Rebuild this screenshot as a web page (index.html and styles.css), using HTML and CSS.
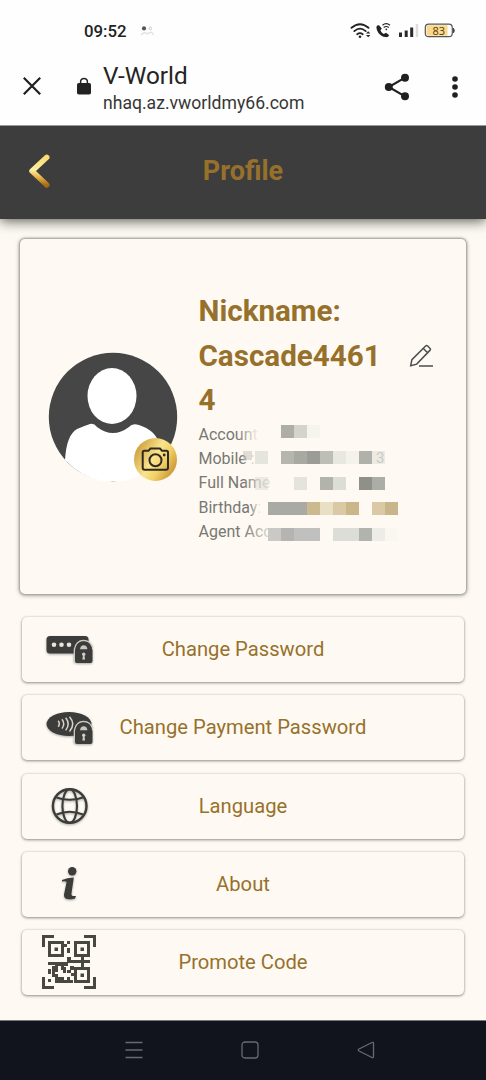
FILE: index.html
```html
<!DOCTYPE html>
<html lang="en">
<head>
<meta charset="utf-8">
<meta name="viewport" content="width=device-width, initial-scale=1">
<title>V-World</title>
<link rel="stylesheet" href="styles.css">
</head>
<body>
<div class="phone">
  <div class="status">
    <span class="clock">09:52</span>
    <svg class="people" width="16" height="12" viewBox="0 0 16 12"><circle cx="4" cy="3.400" r="2.100" fill="#555"/><circle cx="10.400" cy="3.400" r="1.300" fill="none" stroke="#ccc"/><path d="M1 10q3.500-4 6.500-1q4-4 6 1" fill="none" stroke="#e2e2e2" stroke-width="1.500"/></svg>
    <svg class="signals" width="108" height="18" viewBox="0 0 108 18">
      <g fill="none" stroke="#222" stroke-width="1.800" stroke-linecap="round">
        <path d="M1.500 5.800q8.500-7.200 17 0M4.300 9.100q5.700-4.900 11.400 0M7.200 12.200q2.800-2.200 5.500 0"/>
      </g>
      <circle cx="10" cy="14.700" r="1.300" fill="#222"/>
      <path d="M16 11.500l2.200-2.300 2.200 2.300zM16 13l2.200 2.300 2.200-2.300z" fill="#222"/>
      <path d="M29 3.300c-1.900-.4-2.800 1-2.500 3 .7 4.300 4.100 8.100 8.700 8.800 2 .3 3.700-.5 3.800-2.200l-3-2.200-2.200 1.400c-1.600-.9-2.700-2.200-3.300-3.800l1.300-1.800z" fill="#222"/>
      <path d="M32.500 3.200q3.700-3 7.500 0M33.700 5.500q2.500-2 5.100 0" fill="none" stroke="#222" stroke-width="1.200"/><circle cx="36.300" cy="7.300" r=".9" fill="#222"/>
      <path d="M49 10.500h3v4.500h-3zM54.700 8.500h3V15h-3zM60.200 5.500h3V15h-3z" fill="#2a2a2a"/><path d="M65.700 2h2.500v13h-2.500z" fill="#ddd"/>
      <rect x="75.300" y="2.200" width="27" height="12.500" rx="3.500" fill="#fff" stroke="#555" stroke-width="1.200"/>
      <path d="M79 3.200h18.500v10.500H79q-2.500 0-2.500-2.500V5.500q0-2.300 2.500-2.300z" fill="#fad88c"/>
      <path d="M103.500 6.200q1.600 2.300 0 4.600z" fill="#444" stroke="#444"/>
      <text class="battery" x="88.800" y="12.700" text-anchor="middle">83</text>
    </svg>
  </div>
  <div class="browser">
    <svg class="close" width="20" height="20" viewBox="0 0 20 20"><path d="M1.800 1.800l16.400 16.400M18.200 1.800L1.800 18.200" stroke="#202020" stroke-width="2.200"/></svg>
    <svg class="lock" width="14" height="18" viewBox="0 0 14 18"><path d="M3.600 7V4.800a3.400 3.400 0 0 1 6.800 0V7" fill="none" stroke="#222" stroke-width="1.500"/><rect width="14" height="11.500" y="6" rx="1.800" fill="#222"/></svg>
    <div class="address"><div class="site">V-World</div><div class="url">nhaq.az.vworldmy66.com</div></div>
    <svg class="share" width="26" height="28" viewBox="0 0 26 28"><path d="M21 4.600L4.800 14 21 23.400" fill="none" stroke="#202020" stroke-width="2.200"/><g fill="#202020"><circle cx="21" cy="4.700" r="4"/><circle cx="4.800" cy="14" r="4"/><circle cx="21" cy="23.300" r="4"/></g></svg>
    <svg class="more" width="6" height="24" viewBox="0 0 6 24" fill="#202020"><circle cx="3" cy="4" r="2.800"/><circle cx="3" cy="12" r="2.800"/><circle cx="3" cy="20" r="2.800"/></svg>
  </div>
  <header class="header">
    <svg class="back" width="24" height="38" viewBox="0 0 24 38">
      <defs><linearGradient id="arrow" x1="0" y1="0" x2="0" y2="1"><stop offset="0" stop-color="#f8dc70"/><stop offset=".45" stop-color="#fff0a0"/><stop offset=".72" stop-color="#e6b44b"/><stop offset="1" stop-color="#a86a12"/></linearGradient></defs>
      <path d="M4 18L18.800 4.300M4 18L18.800 32" fill="none" stroke="url(#arrow)" stroke-width="5.400" stroke-linecap="round"/>
    </svg>
    <h1>Profile</h1>
  </header>
  <main class="content">
    <section class="profile">
      <svg class="avatar" width="130" height="132" viewBox="0 0 130 132">
        <defs>
          <clipPath id="disc"><path d="M0 0H130V110L110 129H20L0 110z"/></clipPath>
          <linearGradient id="gold" x1="0" y1=".2" x2="1" y2=".8"><stop offset="0" stop-color="#c99732"/><stop offset=".45" stop-color="#fae48d"/><stop offset=".65" stop-color="#f2d269"/><stop offset="1" stop-color="#c38b2c"/></linearGradient>
        </defs>
        <circle cx="65" cy="65" r="64.200" fill="#464646"/>
        <path d="M17 108C18 91 22 81 29 77Q36 74 42 72Q46 71 49 75Q65 87 81 75Q84 71 91 73Q107 78 111 91L113 110Q90 130 65 130Q38 130 17 108z" fill="#fff" clip-path="url(#disc)"/>
        <ellipse cx="64" cy="44" rx="24.500" ry="28" fill="#fff"/>
        <circle cx="107.500" cy="107.500" r="21.500" fill="url(#gold)"/>
        <g fill="none" stroke="#302a20" stroke-width="2"><path d="M94.700 100.500q0-1.700 1.700-1.700h4l2.100-2.300h9.500l2 2.300h4.300q1.700 0 1.700 1.700v15.200q0 2-2 2H96.700q-2 0-2-2z"/><circle cx="107.500" cy="108.300" r="6"/></g><circle cx="116.200" cy="103" r="1.400" fill="#302a20"/>
      </svg>
      <div class="info">
        <div class="nickrow">
          <h2>Nickname: Cascade44614</h2>
          <svg class="pencil" width="25" height="24" viewBox="0 0 25 24" fill="none" stroke="#4c4c4c" stroke-width="1.500"><path d="M1.700 21.700l1.200-6L16.600 2q1-1.100 2.100 0l2.200 2.200q1.200 1.100 0 2.200L7.700 20.100zM14.300 4.500l4.300 4.300M10 22h14"/></svg>
        </div>
        <div class="details">
          <div>Account</div><div>Mobile :</div><div>Full Name</div><div>Birthday:</div><div>Agent Acco</div>
          <svg class="mosaic" width="206" height="128" viewBox="0 0 206 128" shape-rendering="crispEdges">
            <defs><linearGradient id="fade"><stop offset="0" stop-color="#fefaf3" stop-opacity="0"/><stop offset=".75" stop-color="#fefaf3" stop-opacity=".8"/><stop offset="1" stop-color="#fefaf3"/></linearGradient></defs>
            <rect x="38" y="2" width="23" height="22" fill="url(#fade)"/><rect x="42" y="28" width="18" height="22" fill="url(#fade)"/><rect x="44" y="52" width="34" height="22" fill="url(#fade)"/><rect x="50" y="77" width="13" height="22" fill="url(#fade)"/><rect x="44" y="101" width="36" height="24" fill="url(#fade)"/>
            <g transform="translate(82 2)"><path fill="#aeaea6" d="M0 0h13v13H0z"/><path fill="#d5d4cc" d="M13 0h13v13H13z"/><path fill="#f7f4ee" d="M26 0h13v13H26z"/></g>
            <path d="M44 28h9v9h-9z" fill="#bbbbb4" opacity=".45"/>
            <g transform="translate(56 28)"><path fill="#e5e4dd" d="M0 0h13v13H0z"/><path fill="#b5b6ae" d="M26 0h13v13H26z"/><path fill="#a8a9a2" d="M39 0h13v13H39z"/><path fill="#9b9c95" d="M52 0h13v13H52z"/><path fill="#bdbfb7" d="M65 0h13v13H65z"/><path fill="#e9e7e1" d="M78 0h13v13H78z"/><path fill="#f5f2ec" d="M91 0h13v13H91z"/><path fill="#afb1aa" d="M104 0h13v13h-13z"/><path fill="#eceae3" d="M117 0h13v13h-13z"/></g>
            <text class="digit" x="177" y="40">3</text>
            <path d="M56 54h13v13H56z" fill="#d8d6d0" opacity=".45"/>
            <g transform="translate(56 54)"><path fill="#e4e4dd" d="M39 0h13v13H39z"/><path fill="#b1b3ac" d="M65 0h13v13H65z"/><path fill="#dcddd5" d="M78 0h13v13H78z"/><path fill="#8e9089" d="M104 0h13v13h-13z"/><path fill="#abada7" d="M117 0h13v13h-13z"/></g>
            <g transform="translate(69 79)"><path fill="#a9a9a5" d="M0 0h39v13H0z"/><path fill="#cbb98f" d="M39 0h13v13H39z"/><path fill="#e9dfc2" d="M52 0h13v13H52z"/><path fill="#dac9a4" d="M65 0h13v13H65z"/><path fill="#cab688" d="M78 0h13v13H78z"/><path fill="#dac9a4" d="M104 0h13v13h-13z"/><path fill="#c9b58a" d="M117 0h13v13h-13z"/></g>
            <g transform="translate(69 105)"><path fill="#cac9c6" d="M0 0h13v13H0z"/><path fill="#b5b4b1" d="M13 0h13v13H13z"/><path fill="#c0c0be" d="M26 0h26v13H26z"/><path fill="#dcddd6" d="M65 0h26v13H65z"/><path fill="#b1b4ad" d="M91 0h13v13H91z"/><path fill="#edece6" d="M104 0h13v13h-13z"/><path fill="#faf7f1" d="M117 0h13v13h-13z"/></g>
          </svg>
        </div>
      </div>
    </section>
    <nav class="menu">
      <a class="item"><svg class="icon" width="60" height="60" viewBox="0 0 60 60">
        <rect x="6.500" y="17" width="42" height="17.500" rx="3.500" fill="#3c3c3a"/><g fill="#e7e4dc"><circle cx="14" cy="25.800" r="2.300"/><circle cx="21.500" cy="25.800" r="2.300"/><circle cx="29" cy="25.800" r="2.300"/></g>
        <g id="padlock"><path d="M34.500 43V30.500q1.600-9 9.200-9 6.500 0 8.600 7" fill="none" stroke="#ccc9c1" stroke-width="1.600"/><path d="M35.300 31.500q.4-9 8.400-9t8.400 9z" fill="#3c3c3a"/><path d="M35 30.500h17.500V42q0 2-2 2H37q-2 0-2-2z" fill="#3c3c3a"/><path d="M40 30.300q.5-4 3.700-4t3.700 4z" fill="#c9c6bf"/><circle cx="43.700" cy="35.300" r="1.700" fill="#d0cdc6"/><path d="M43 36h1.400l.7 4.500h-2.800z" fill="#d0cdc6"/></g>
      </svg><span>Change Password</span></a>
      <a class="item"><svg class="icon" width="60" height="60" viewBox="0 0 60 60"><ellipse cx="29" cy="27" rx="22.500" ry="12" fill="#3c3c3a"/><g fill="none" stroke="#d7d4cc" stroke-width="1.500"><path d="M18.200 23.800q2.200 3 0 6M22 22.200q3.500 4.700 0 9.400M25.700 20.800q5 6.400 0 12.600M29.500 19.800q6.500 7.300 0 14.600"/></g><use href="#padlock" y="3"/></svg><span>Change Payment Password</span></a>
      <a class="item"><svg class="icon" width="60" height="60" viewBox="0 0 60 60" fill="none" stroke="#3c3c3a" stroke-width="2.100"><circle cx="29.700" cy="30" r="16.800" stroke-width="2.400"/><ellipse cx="29.700" cy="30" rx="7.300" ry="16.800"/><path d="M16.500 21.500q13.200 4.500 26.400 0M16.500 38.500q13.200-5.500 26.400 0"/></svg><span>Language</span></a>
      <a class="item"><svg class="icon" width="60" height="60" viewBox="0 0 60 60" fill="#3c3c3a"><circle cx="32.200" cy="17.300" r="4.200"/><path d="M22 26q5-2.300 11.800-2.500L31.500 39.200q-.6 3.600 4.500 2.700l-1 2.500q-11.500 3-11-4l2.500-12q.3-1.800-4.500-1z"/></svg><span>About</span></a>
      <a class="item"><svg class="icon qr" width="60" height="60" viewBox="0 0 60 60" fill="#484841">
        <path d="M2 3h12v3H5v9H2zM44 3h12v12h-3V6h-9zM2 45h3v9h9v3H2zM53 45h3v12H44v-3h9z"/>
        <path fill-rule="evenodd" d="M8 9h16v16H8zm3 3v10h10V12zM34 9h16v16H34zm3 3v10h10V12zM34 35h16v16H34zm3 3v10h10V38z"/>
        <path d="M14.500 15.500h3.500v3.500h-3.500zM40.500 15.500H44V19h-3.500zM40.500 41.500H44V45h-3.500zM24 12h3v3h-3zM27 9h3v3h-3zM27 16h3v5h-3zM27 25h4v3h10v-3h3v3h6v3h-6v4h-3v-4H28v3h-4v4h-3v-4h-3v6h-3v-7H8v-3h19zM8 37h3v5H8zM12 34h3v8h3v3h6v3h3v-3h3v3h3v3H15v-6h-3zM23 35h3v6h-3zM27 38h4v3h-4zM30 34h4v4h-4zM31 41h3v3h-3zM8 47h3v3H8z"/>
      </svg><span>Promote Code</span></a>
    </nav>
  </main>
  <footer class="navbar">
    <svg width="18" height="18" viewBox="0 0 18 18" fill="none" stroke="#676a70" stroke-width="1.300"><path d="M.5 1.500h17M.5 9h17M.5 16.500h17"/></svg>
    <svg width="18" height="18" viewBox="0 0 18 18" fill="none" stroke="#676a70" stroke-width="1.300"><rect x="1" y="1" width="16" height="16" rx="3"/></svg>
    <svg width="18" height="18" viewBox="0 0 18 18" fill="none" stroke="#676a70" stroke-width="1.300"><path d="M15 1.500q1.500-.7 1.500 1v13q0 1.700-1.500 1L2 10q-1.500-1 0-2z"/></svg>
  </footer>
</div>
</body>
</html>
```
FILE: styles.css
```css
* { box-sizing: border-box; }
body { margin: 0; font-family: Roboto, "Liberation Sans", sans-serif; background: #fefaf3; }
svg { display: block; flex: none; }
.phone { width: 486px; height: 1080px; overflow: hidden; display: flex; flex-direction: column; }
.status { height: 48px; background: #fefefe; display: flex; align-items: flex-start; padding: 22px 28px 0 84px; }
.clock { font: 500 16.800px/18px Roboto, sans-serif; color: #222; width: 56px; }
.people { margin-top: 3px; }
.signals { margin-left: auto; }
.battery { font: 500 11px "Open Sans", sans-serif; fill: #503b12; }
.browser { height: 77px; background: #fefefe; display: flex; align-items: center; padding: 0 28px 0 22px; }
.close, .lock { margin-bottom: 1px; }
.lock { margin-left: 35px; }
.address { margin-left: 12px; margin-top: 3px; }
.site { font-size: 24.300px; line-height: 28px; color: #242424; }
.url { font-size: 17.600px; line-height: 22px; margin-top: 2px; color: #363636; }
.share { margin-left: auto; }
.more { margin-left: 42px; }
.header { height: 94px; flex: none; background: #3d3d3d; border-top: 1px solid #999; display: grid; grid-template-columns: 1fr auto 1fr; align-items: center; padding: 0 28px 2px; box-shadow: 0 2px 12px #555850; clip-path: inset(0 0 -20px); position: relative; }
.header h1 { margin: 0; padding-bottom: 2px; font-weight: 700; font-size: 27px; color: #97712c; }
.content { flex: 1; padding: 20px 20px 0; background: #fefaf3; }
.profile { height: 355px; border-radius: 5px; background: #fefaf3; box-shadow: 0 0 2px 1px #a2a39b, 0 1px 5px #999b92; display: flex; align-items: flex-start; padding: 50px 0 0 28px; }
.avatar { margin-top: 63px; }
.info { margin-left: 20.500px; width: 250px; }
.nickrow { display: flex; align-items: center; }
.nickrow h2 { width: 186px; margin: 0; font-size: 29.600px; line-height: 44.600px; font-weight: 700; color: #97712c; word-break: break-word; }
.pencil { margin-left: 24px; }
.details { position: relative; font-size: 16px; line-height: 24.300px; color: #777872; }
.mosaic { position: absolute; left: 0; top: 0; }
.digit { font-size: 15px; fill: #c8cac3; }
.menu { display: flex; flex-direction: column; gap: 13.300px; padding: 23px 2px 0; }
.item { height: 65px; border-radius: 5px; background: #fefaf3; box-shadow: 0 1px 3px #8e9088, 0 0 2px #d7d5ce; display: grid; grid-template-columns: 1fr auto 1fr; align-items: center; padding: 0 18px 1px; font-size: 20.200px; color: #97712c; }
.icon { filter: drop-shadow(0 1px 1px #aaa9a3); }
.qr { filter: none; }
.navbar { height: 60px; flex: none; background: #11141c; border-top: 1px solid #777a7c; display: flex; justify-content: space-between; align-items: center; padding: 0 111px 2px 125px; }
```
